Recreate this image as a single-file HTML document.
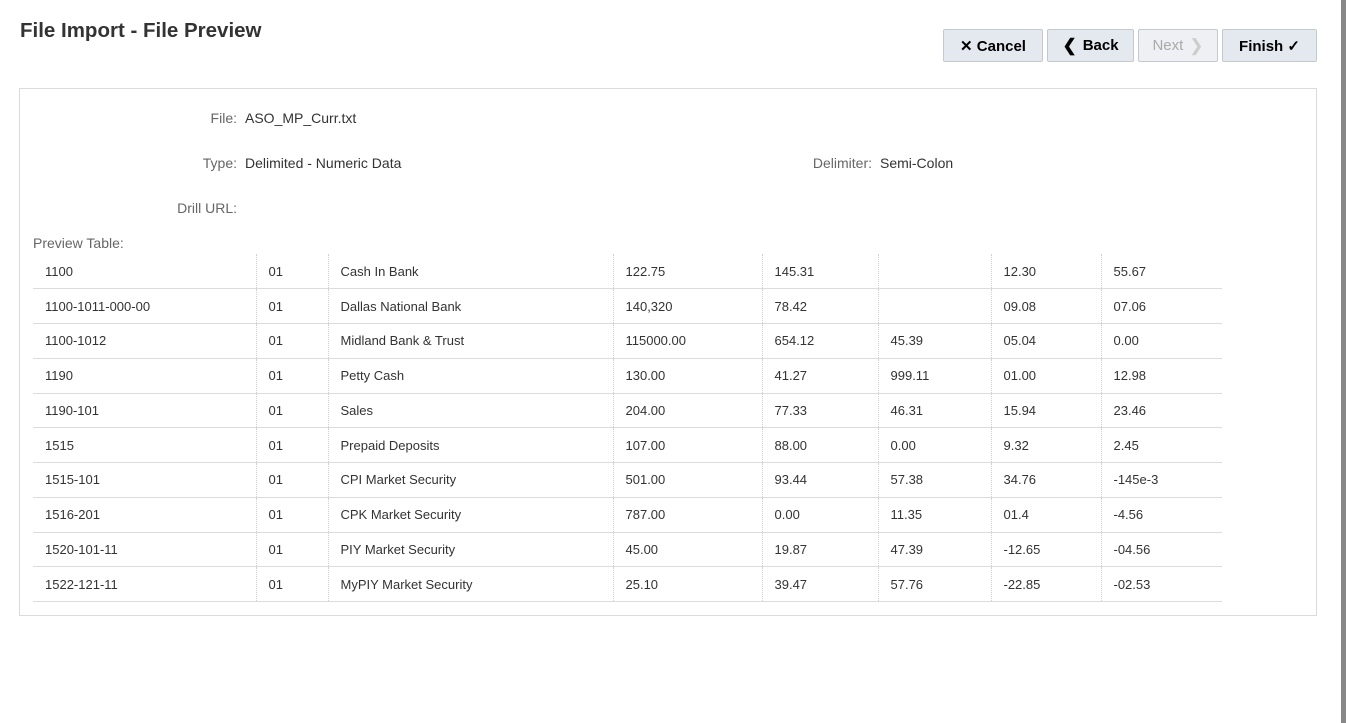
<!DOCTYPE html><html><head><style>
body{margin:0;width:1346px;height:723px;background:#fff;font-family:"Liberation Sans",Arial,sans-serif;position:relative;overflow:hidden}
h1{position:absolute;left:20px;top:19px;margin:0;font-size:20.5px;font-weight:bold;color:#333}
.btn{position:absolute;top:29px;height:33px;box-sizing:border-box;border:1px solid #c4c8d0;border-radius:2px;background:#e4e8ef;font-size:15px;font-weight:bold;color:#000;display:flex;align-items:center;justify-content:center;gap:6px}
.panel{position:absolute;left:19px;top:88px;width:1298px;height:528px;box-sizing:border-box;border:1px solid #d9dcd8}
.lbl{position:absolute;font-size:14px;color:#666;text-align:right}
.val{position:absolute;font-size:14px;color:#333}
table{position:absolute;left:33px;top:254px;border-collapse:collapse;font-size:13px;color:#333}
td{height:34.75px;padding:0 0 0 12px;border-bottom:1px solid #dcdcdc;border-left:1px dotted #d0d0d0;box-sizing:border-box}
td:first-child{border-left:none}
.bar{position:absolute;right:0;top:0;width:5px;height:723px;background:#888}
</style></head><body>
<h1>File Import - File Preview</h1>
<div class="btn" style="left:943px;width:100px">✕ Cancel</div>
<div class="btn" style="left:1047px;width:87px"><span style="font-size:17px">❮</span> Back</div>
<div class="btn" style="left:1138px;width:80px;color:#aaa;background:#eef0f4;font-weight:normal">Next <span style="color:#ccc;font-size:17px">❯</span></div>
<div class="btn" style="left:1222px;width:95px">Finish ✓</div>
<div class="panel"></div>
<div class="lbl" style="left:150px;width:87px;top:110px">File:</div><div class="val" style="left:245px;top:110px">ASO_MP_Curr.txt</div>
<div class="lbl" style="left:150px;width:87px;top:155px">Type:</div><div class="val" style="left:245px;top:155px">Delimited - Numeric Data</div>
<div class="lbl" style="left:780px;width:92px;top:155px">Delimiter:</div><div class="val" style="left:880px;top:155px">Semi-Colon</div>
<div class="lbl" style="left:150px;width:87px;top:200px">Drill URL:</div>
<div class="lbl" style="left:33px;top:235px">Preview Table:</div>
<table>
<colgroup><col style="width:223px"><col style="width:72px"><col style="width:285px"><col style="width:149px"><col style="width:116px"><col style="width:113px"><col style="width:110px"><col style="width:121px"></colgroup>
<tr><td>1100</td><td>01</td><td>Cash In Bank</td><td>122.75</td><td>145.31</td><td></td><td>12.30</td><td>55.67</td></tr>
<tr><td>1100-1011-000-00</td><td>01</td><td>Dallas National Bank</td><td>140,320</td><td>78.42</td><td></td><td>09.08</td><td>07.06</td></tr>
<tr><td>1100-1012</td><td>01</td><td>Midland Bank &amp; Trust</td><td>115000.00</td><td>654.12</td><td>45.39</td><td>05.04</td><td>0.00</td></tr>
<tr><td>1190</td><td>01</td><td>Petty Cash</td><td>130.00</td><td>41.27</td><td>999.11</td><td>01.00</td><td>12.98</td></tr>
<tr><td>1190-101</td><td>01</td><td>Sales</td><td>204.00</td><td>77.33</td><td>46.31</td><td>15.94</td><td>23.46</td></tr>
<tr><td>1515</td><td>01</td><td>Prepaid Deposits</td><td>107.00</td><td>88.00</td><td>0.00</td><td>9.32</td><td>2.45</td></tr>
<tr><td>1515-101</td><td>01</td><td>CPI Market Security</td><td>501.00</td><td>93.44</td><td>57.38</td><td>34.76</td><td>-145e-3</td></tr>
<tr><td>1516-201</td><td>01</td><td>CPK Market Security</td><td>787.00</td><td>0.00</td><td>11.35</td><td>01.4</td><td>-4.56</td></tr>
<tr><td>1520-101-11</td><td>01</td><td>PIY Market Security</td><td>45.00</td><td>19.87</td><td>47.39</td><td>-12.65</td><td>-04.56</td></tr>
<tr><td>1522-121-11</td><td>01</td><td>MyPIY Market Security</td><td>25.10</td><td>39.47</td><td>57.76</td><td>-22.85</td><td>-02.53</td></tr>
</table>
<div class="bar"></div>
</body></html>
